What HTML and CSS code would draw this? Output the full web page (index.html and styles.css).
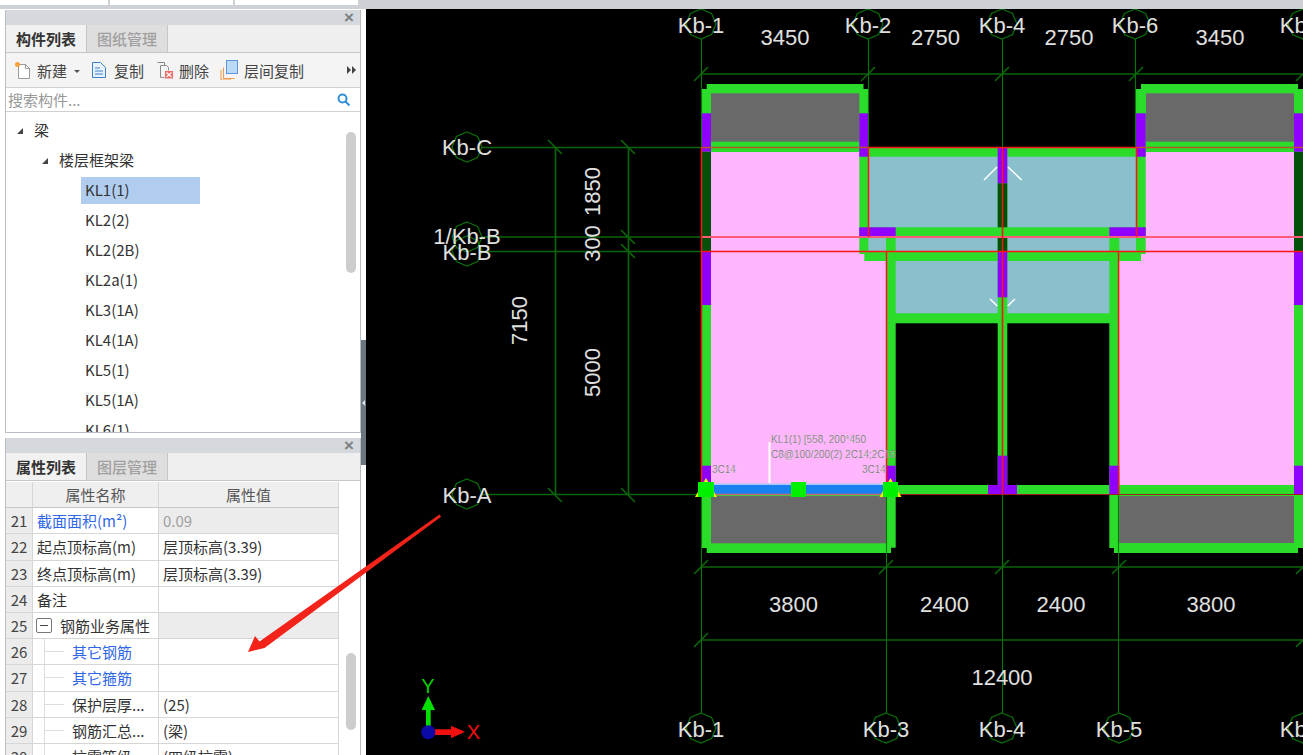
FILE: index.html
```html
<!DOCTYPE html>
<html lang="zh-CN">
<head>
<meta charset="UTF-8">
<meta name="viewport" content="width=device-width, initial-scale=1.0">
<title>构件列表</title>
<link rel="stylesheet" href="styles.css">
</head>
<body>

<div class="topbar">
    <div class="top-cell top-cell-a"></div>
    <div class="top-cell top-cell-b"></div>
    <div class="top-cell top-cell-c"></div>
</div>

<div class="main">
    <div class="sidebar">

        <!-- component list -->
        <section class="panel panel-list">
            <div class="panel-title"><span class="panel-close">&times;</span></div>
            <div class="tabs">
                <div class="tab active">构件列表</div>
                <div class="tab">图纸管理</div>
            </div>
            <div class="toolbar">
                <svg class="tool-icon icon-new" viewBox="0 0 18 18">
                    <path class="doc" d="M4.500 3.500h7l4 4v10h-11z"/>
                    <path class="doc-fold" d="M11.500 3.500v4h4"/>
                    <circle class="spark" cx="3.500" cy="3.500" r="2.500"/>
                </svg>
                <span class="tool-label">新建</span>
                <span class="caret"></span>
                <svg class="tool-icon icon-copy" viewBox="0 0 16 18">
                    <path class="doc-blue" d="M1.500 1.500h8l5 5v10h-13z"/>
                    <path class="doc-lines" d="M4 7h5M4 10h8M4 13h8"/>
                </svg>
                <span class="tool-label">复制</span>
                <svg class="tool-icon icon-del" viewBox="0 0 18 18">
                    <path class="doc-gray" d="M1.500 1.500h7v3"/>
                    <path class="doc-gray" d="M4.500 4.500h6l2 2v3M4.500 4.500v12h4"/>
                    <rect class="del-box" x="9" y="10" width="8" height="7.500"/>
                    <path class="del-x" d="M10.500 11.500l5 4.500M15.500 11.500l-5 4.500"/>
                </svg>
                <span class="tool-label">删除</span>
                <svg class="tool-icon icon-floor" viewBox="0 0 18 20">
                    <path class="floor-back" d="M3.500 7.500v11h11M1 10v10h10"/>
                    <rect class="floor-front" x="6.500" y="0.500" width="11" height="13"/>
                </svg>
                <span class="tool-label">层间复制</span>
                <span class="more">
                    <svg viewBox="0 0 9 8"><path d="M0 0l4 4-4 4zM5 0l4 4-4 4z"/></svg>
                </span>
            </div>
            <div class="search">
                <span class="search-hint">搜索构件...</span>
                <svg class="search-icon" viewBox="0 0 14 14">
                    <circle cx="5.500" cy="5.500" r="4"/>
                    <path d="M8.500 8.500l4 4"/>
                </svg>
            </div>
            <div class="tree">
                <div class="tree-row level-0"><span class="twist"></span>梁</div>
                <div class="tree-row level-1"><span class="twist"></span>楼层框架梁</div>
                <div class="tree-row level-2"><span class="leaf selected">KL1(1)</span></div>
                <div class="tree-row level-2"><span class="leaf">KL2(2)</span></div>
                <div class="tree-row level-2"><span class="leaf">KL2(2B)</span></div>
                <div class="tree-row level-2"><span class="leaf">KL2a(1)</span></div>
                <div class="tree-row level-2"><span class="leaf">KL3(1A)</span></div>
                <div class="tree-row level-2"><span class="leaf">KL4(1A)</span></div>
                <div class="tree-row level-2"><span class="leaf">KL5(1)</span></div>
                <div class="tree-row level-2"><span class="leaf">KL5(1A)</span></div>
                <div class="tree-row level-2"><span class="leaf">KL6(1)</span></div>
                <div class="scroll-thumb thumb-tree"></div>
            </div>
        </section>

        <!-- properties -->
        <section class="panel panel-props">
            <div class="panel-title"><span class="panel-close">&times;</span></div>
            <div class="tabs">
                <div class="tab active">属性列表</div>
                <div class="tab">图层管理</div>
            </div>
            <div class="props">
                <div class="props-grid">
                    <div class="cell head"></div>
                    <div class="cell head">属性名称</div>
                    <div class="cell head">属性值</div>

                    <div class="cell num">21</div>
                    <div class="cell name blue">截面面积(m²)</div>
                    <div class="cell value muted">0.09</div>

                    <div class="cell num">22</div>
                    <div class="cell name">起点顶标高(m)</div>
                    <div class="cell value">层顶标高(3.39)</div>

                    <div class="cell num">23</div>
                    <div class="cell name">终点顶标高(m)</div>
                    <div class="cell value">层顶标高(3.39)</div>

                    <div class="cell num">24</div>
                    <div class="cell name">备注</div>
                    <div class="cell value"></div>

                    <div class="cell num">25</div>
                    <div class="cell name group"><span class="minus"></span>钢筋业务属性</div>
                    <div class="cell value shaded"></div>

                    <div class="cell num">26</div>
                    <div class="cell name child blue">其它钢筋</div>
                    <div class="cell value"></div>

                    <div class="cell num">27</div>
                    <div class="cell name child blue">其它箍筋</div>
                    <div class="cell value"></div>

                    <div class="cell num">28</div>
                    <div class="cell name child">保护层厚...</div>
                    <div class="cell value">(25)</div>

                    <div class="cell num">29</div>
                    <div class="cell name child">钢筋汇总...</div>
                    <div class="cell value">(梁)</div>

                    <div class="cell num">30</div>
                    <div class="cell name child">抗震等级</div>
                    <div class="cell value">(四级抗震)</div>
                </div>
                <div class="scroll-thumb thumb-props"></div>
            </div>
        </section>
    </div>

    <div class="splitter"><span class="splitter-grip"></span></div>

    <!-- drawing, coordinates are page pixels -->
    <svg class="canvas" viewBox="366 9 937 746">
        <defs>
            <polygon id="bubble" class="bubble" points="0,-15 10.600,-10.600 15,0 10.600,10.600 0,15 -10.600,10.600 -15,0 -10.600,-10.600"/>
        </defs>

        <!-- slabs -->
        <g class="pink">
            <rect x="711" y="151" width="149" height="101"/>
            <rect x="711" y="251" width="176" height="235"/>
            <rect x="1145" y="151" width="150" height="101"/>
            <rect x="1118" y="251" width="177" height="235"/>
        </g>
        <g class="teal">
            <rect x="868" y="156" width="268" height="72"/>
            <rect x="868" y="236" width="268" height="16"/>
            <rect x="895" y="260" width="215" height="54"/>
        </g>

        <!-- green walls -->
        <g class="wall">
            <polygon points="701.700,89 706.700,89 706.700,84 863.500,84 863.500,89 868.300,89 868.300,152 701.700,152"/>
            <polygon points="1136,89 1141,89 1141,84 1298,84 1298,89 1303,89 1303,152 1136,152"/>
            <polygon points="701.700,494 895.700,494 895.700,547.700 891,547.700 891,553 706.700,553 706.700,548 701.700,548"/>
            <polygon points="1109.300,494 1303,494 1303,548 1298,548 1298,553 1114,553 1114,548 1109.300,548"/>
            <rect x="868" y="147.300" width="268" height="9.400"/>
            <rect x="859.300" y="151" width="9" height="103"/>
            <rect x="1136" y="151" width="9.700" height="103"/>
            <rect x="859.300" y="227.300" width="286.400" height="9.400"/>
            <rect x="864.300" y="251.700" width="276.700" height="9.300"/>
            <rect x="886" y="236" width="9.700" height="250"/>
            <rect x="1109.300" y="236" width="10" height="250"/>
            <rect x="886" y="313.300" width="233" height="10"/>
            <rect x="886" y="485" width="417" height="9.400"/>
            <rect x="997.700" y="147" width="9.600" height="340"/>
            <rect x="701.700" y="151" width="9.300" height="335"/>
            <rect x="1294" y="151" width="9" height="335"/>
        </g>
        <g class="gray">
            <rect x="711" y="93.300" width="148.300" height="48.400"/>
            <rect x="1146" y="93.300" width="148" height="48.400"/>
            <rect x="711" y="496" width="175.700" height="47.300"/>
            <rect x="1119.300" y="496" width="174.700" height="47"/>
        </g>

        <g class="dark-wall">
            <rect x="701.700" y="151.700" width="9.300" height="100"/>
            <rect x="1294" y="151.700" width="9" height="100"/>
            <rect x="997.700" y="183.300" width="9.600" height="44"/>
            <rect x="997.700" y="236.700" width="9.600" height="15"/>
        </g>
        <g class="column">
            <rect x="701.700" y="113.300" width="9.300" height="38.400"/>
            <rect x="859.300" y="113.300" width="9" height="43.400"/>
            <rect x="1136" y="113.300" width="9.700" height="43.400"/>
            <rect x="1294" y="113.300" width="9" height="38.400"/>
            <rect x="859.300" y="227.300" width="36.400" height="9.400"/>
            <rect x="1109.300" y="227.300" width="36.400" height="9.400"/>
            <rect x="997.700" y="147.300" width="9.600" height="36"/>
            <rect x="997.700" y="251.700" width="9.600" height="45.600"/>
            <rect x="701.700" y="251.700" width="9.300" height="53.300"/>
            <rect x="1294" y="251.700" width="9" height="53.300"/>
            <rect x="701.700" y="465.700" width="9.300" height="18"/>
            <rect x="886" y="465.700" width="9.700" height="20"/>
            <rect x="997.700" y="455.700" width="9.600" height="30"/>
            <rect x="988" y="485" width="29" height="9.400"/>
            <rect x="1109.300" y="465.700" width="10" height="28.700"/>
            <rect x="1294" y="465.700" width="9" height="28.700"/>
        </g>

        <!-- axis lines -->
        <g class="axis">
            <path d="M701.500 39V713M868.500 39V147M1002.500 39V485M1135.500 39V147"/>
            <path d="M886.500 494V713M1002.500 494V713M1118.500 494V713"/>
        </g>
        <g class="dim">
            <path d="M482 147.500H701M482 237H701M482 251.500H701M482 494.500H701"/>
            <path d="M701 74H1303M701 567H1303M701 640H1303M555.500 147V495M628.500 147V495"/>
            <path d="M694 81l14-14M861 81l14-14M995 81l14-14M1129 81l14-14M1296 81l14-14"/>
            <path d="M694 574l14-14M879 574l14-14M995 574l14-14M1112 574l14-14M1296 574l14-14M694 647l14-14M1296 647l14-14"/>
            <path d="M548 140l14 14M621 140l14 14M621 230l14 14M621 244l14 14M548 488l14 14M621 488l14 14"/>
        </g>

        <!-- beam axes -->
        <g class="beam-line">
            <path d="M701.500 147.500H868"/>
            <path d="M1136 147.500H1303"/>
        </g>
        <path class="red-pale" d="M701 237H1303"/>
        <path class="red-line" d="M868 147.500H1136.500M701 251.500H1303M701.500 147V486M868.500 147V237M886.500 251V495M1002.500 147V495M1136.500 147V237M1118.500 251V495"/>
        <path class="red-dark" d="M895 494.500H1303"/>

        <!-- selected beam -->
        <rect class="beam-glow" x="711" y="483.500" width="176" height="2"/>
        <rect class="beam" x="711" y="485" width="176" height="9"/>
        <path class="beam-edge" d="M711 494.500H887"/>
        <path class="leader" d="M769.500 442V483"/>
        <polygon class="grip-tri" points="706,478 717,497 695,497"/>
        <polygon class="grip-tri" points="890.500,478 901.500,497 879.500,497"/>
        <rect class="grip" x="698" y="482" width="16" height="15"/>
        <rect class="grip" x="791" y="482" width="15" height="15"/>
        <rect class="grip" x="883" y="482" width="15" height="15"/>
        <text class="note" x="771" y="443">KL1(1) [558, 200*450</text>
        <text class="note" x="771" y="458">C8@100/200(2) 2C14;2C16</text>
        <text class="note" x="712" y="473">3C14</text>
        <text class="note" x="862" y="473">3C14</text>

        <!-- slab marks -->
        <path class="mark" d="M984 180l13-13M1021.700 180l-13.700-13M990 299l7.300 7M1015 299l-7.300 7"/>

        <!-- axis bubbles and labels -->
        <use href="#bubble" x="701" y="24"/>
        <use href="#bubble" x="868" y="24"/>
        <use href="#bubble" x="1002" y="24"/>
        <use href="#bubble" x="1135" y="24"/>
        <use href="#bubble" x="1303" y="24"/>
        <use href="#bubble" x="701" y="728"/>
        <use href="#bubble" x="886" y="728"/>
        <use href="#bubble" x="1002" y="728"/>
        <use href="#bubble" x="1119" y="728"/>
        <use href="#bubble" x="1303" y="728"/>
        <use href="#bubble" x="467" y="147"/>
        <use href="#bubble" x="467" y="237"/>
        <use href="#bubble" x="467" y="251"/>
        <use href="#bubble" x="467" y="494"/>

        <g class="label">
            <text x="701" y="33">Kb-1</text>
            <text x="868" y="33">Kb-2</text>
            <text x="1002" y="33">Kb-4</text>
            <text x="1135" y="33">Kb-6</text>
            <text x="1303" y="33">Kb-7</text>
            <text x="785" y="45">3450</text>
            <text x="935.500" y="45">2750</text>
            <text x="1069" y="45">2750</text>
            <text x="1220" y="45">3450</text>
            <text x="793.500" y="612">3800</text>
            <text x="944.500" y="612">2400</text>
            <text x="1061" y="612">2400</text>
            <text x="1211" y="612">3800</text>
            <text x="1002" y="685">12400</text>
            <text x="701" y="737">Kb-1</text>
            <text x="886" y="737">Kb-3</text>
            <text x="1002" y="737">Kb-4</text>
            <text x="1119" y="737">Kb-5</text>
            <text x="1303" y="737">Kb-7</text>
            <text x="467" y="155">Kb-C</text>
            <text x="467" y="244">1/Kb-B</text>
            <text x="467" y="260">Kb-B</text>
            <text x="467" y="503">Kb-A</text>
            <text transform="translate(600 191.500) rotate(-90)">1850</text>
            <text transform="translate(600 243.500) rotate(-90)">300</text>
            <text transform="translate(527 320.500) rotate(-90)">7150</text>
            <text transform="translate(600 372.500) rotate(-90)">5000</text>
        </g>

        <!-- ucs icon -->
        <path class="ucs-y" d="M426 710h4.700v22h-4.700zM428.300 696l6.700 14h-13.400z"/>
        <path class="ucs-x" d="M430 729.300h21v-3.600l14 6-14 6.600v-3.300h-21z"/>
        <circle class="ucs-o" cx="428.300" cy="732.300" r="7"/>
        <text class="ucs-label-y" x="428" y="693">Y</text>
        <text class="ucs-label-x" x="473.500" y="738.500">X</text>
    </svg>
</div>

<!-- red arrow drawn over the screenshot -->
<svg class="callout" viewBox="0 0 1303 755">
    <polygon points="439.500,514.500 441,516.800 264.500,648 248,652 255,636 259.500,641.500"/>
</svg>

</body>
</html>
```

FILE: styles.css
```css
* {
    box-sizing: border-box;
}
html, body {
    height: 100%;
}
body {
    margin: 0;
    overflow: hidden;
    background-color: #fff;
    font-family: "Noto Sans CJK SC", "Noto Sans", sans-serif;
    font-size: 15px;
    color: #333;
}

.topbar {
    display: flex;
    height: 9px;
    background-color: #cdd0d5;
}
.top-cell {
    height: 5px;
    background-color: #fff;
    margin-right: 2px;
}
.top-cell-a {
    width: 108px;
}
.top-cell-b {
    width: 123px;
}
.top-cell-c {
    width: 123px;
}

.main {
    display: flex;
    height: 746px;
}
.sidebar {
    width: 361px;
    padding: 1px 0 0 5px;
    background-color: #fff;
}
.panel {
    width: 356px;
    border: 1px solid #b9bcc0;
    border-top: none;
    border-bottom: none;
    overflow: hidden;
}
.panel-list {
    height: 423px;
    border-bottom: 1px solid #b9bcc0;
    margin-bottom: 5px;
}
.panel-props {
    height: 317px;
}
.panel-title {
    display: flex;
    justify-content: flex-end;
    align-items: center;
    height: 15px;
    padding-right: 6px;
    background-color: #d5d8dc;
}
.panel-close {
    font-family: "Liberation Sans", sans-serif;
    font-size: 17px;
    font-weight: bold;
    line-height: 15px;
    color: #7c7f83;
}
.tabs {
    display: flex;
    height: 28px;
    background-color: #efefef;
    border-bottom: 1px solid #c6c6c6;
}
.tab {
    width: 81px;
    text-align: center;
    line-height: 27px;
    font-size: 15px;
    color: #a0a0a0;
    background-color: #dedede;
    font-weight: 500;
}
.tab.active {
    color: #333;
    background-color: #f1f1f1;
    border-right: 1px solid #c6c6c6;
    font-weight: 700;
}
.tab:nth-child(2) {
    border-right: 1px solid #c6c6c6;
}

.toolbar {
    display: flex;
    align-items: center;
    height: 35px;
    padding-left: 8px;
    background-color: #f4f4f4;
    border-bottom: 1px solid #d0d0d0;
    position: relative;
}
.tool-icon {
    flex: none;
    width: 18px;
    height: 18px;
}
.tool-label {
    flex: none;
    font-size: 15px;
    color: #444;
    margin-left: 5px;
}
.caret {
    width: 0;
    height: 0;
    margin: 2px 0 0 7px;
    border-left: 3px solid transparent;
    border-right: 3px solid transparent;
    border-top: 3px solid #555;
}
.icon-copy {
    margin-left: 11px;
    width: 16px;
}
.icon-copy + .tool-label {
    margin-left: 7px;
}
.icon-del {
    margin-left: 12px;
}
.icon-floor {
    margin-left: 11px;
    height: 20px;
}
.icon-floor + .tool-label {
    margin-left: 6px;
}
.more {
    margin-left: auto;
    margin-right: 4px;
    width: 9px;
    display: flex;
}
.more svg {
    width: 9px;
    height: 8px;
    fill: #444;
}
.doc {
    fill: #fff;
    stroke: #999;
}
.doc-fold {
    fill: none;
    stroke: #999;
}
.spark {
    fill: #f5a33b;
}
.doc-blue {
    fill: #e8f2fc;
    stroke: #3d80c8;
}
.doc-lines {
    fill: none;
    stroke: #3d80c8;
}
.doc-gray {
    fill: none;
    stroke: #8a8a8a;
}
.del-box {
    fill: #ee6a6a;
}
.del-x {
    fill: none;
    stroke: #fff;
    stroke-width: 1.2;
}
.floor-back {
    fill: none;
    stroke: #ee9a4a;
}
.floor-front {
    fill: #bcd9f7;
    stroke: #5b97dc;
}

.search {
    display: flex;
    align-items: center;
    justify-content: space-between;
    height: 24px;
    padding: 0 4px 0 2px;
    background-color: #fff;
    border-bottom: 1px solid #d0d0d0;
}
.search-hint {
    font-size: 15px;
    color: #999;
}
.search-icon {
    width: 14px;
    height: 14px;
    margin-right: 5px;
    fill: none;
    stroke: #2f8fd6;
    stroke-width: 2;
}

.tree {
    position: relative;
    height: 320px;
    padding-top: 3px;
    overflow: hidden;
    background-color: #fff;
}
.tree-row {
    display: flex;
    align-items: center;
    height: 30px;
    font-size: 15px;
    color: #333;
}
.level-0 {
    padding: 0 0 2px 11px;
}
.level-1 {
    padding: 0 0 2px 36px;
}
.level-2 {
    padding-left: 75px;
}
.twist {
    width: 0;
    height: 0;
    margin: 3px 11px 0 0;
    border-bottom: 6px solid #444;
    border-left: 6px solid transparent;
}
.leaf {
    display: block;
    width: 119px;
    height: 27px;
    padding-left: 4px;
    line-height: 26px;
}
.leaf.selected {
    background-color: #b0cdef;
}
.scroll-thumb {
    position: absolute;
    right: 4px;
    width: 10px;
    border-radius: 5px;
    background-color: #cdcdcd;
}
.thumb-tree {
    top: 20px;
    height: 141px;
}

.props {
    position: relative;
    height: 274px;
    padding-top: 1px;
    overflow: hidden;
    background-color: #fff;
}
.props-grid {
    display: grid;
    grid-template-columns: 27px 126px 180px;
    grid-auto-rows: 26.2px;
    width: 333px;
}
.cell {
    display: flex;
    align-items: center;
    position: relative;
    padding-left: 4px;
    font-size: 15px;
    color: #333;
    white-space: nowrap;
    background-color: #fff;
    border-right: 1px solid #d6d6d6;
    border-bottom: 1px solid #d6d6d6;
}
.cell.head {
    justify-content: center;
    padding-left: 0;
    color: #555;
    background-color: #efefef;
    border-bottom: 1px solid #c8c8c8;
}
.cell.num {
    justify-content: center;
    padding-left: 0;
    color: #444;
    background-color: #ececec;
}
.cell.blue {
    color: #2f66e8;
}
.cell.muted {
    color: #a0a0a0;
    background-color: #ececec;
}
.cell.shaded {
    background-color: #ececec;
}
.cell.group {
    padding-left: 3px;
}
.minus {
    position: relative;
    flex: none;
    width: 16px;
    height: 15px;
    margin-right: 8px;
    border: 1px solid #777;
    border-radius: 2px;
    background-color: #fff;
}
.minus::after {
    content: '';
    position: absolute;
    left: 3px;
    right: 3px;
    top: 6px;
    height: 1px;
    background-color: #444;
}
.cell.child {
    padding-left: 39px;
}
.cell.child::before {
    content: '';
    position: absolute;
    left: 11px;
    top: 0;
    bottom: 0;
    width: 1px;
    background-color: #ddd;
}
.cell.child::after {
    content: '';
    position: absolute;
    left: 11px;
    top: 12px;
    width: 20px;
    height: 1px;
    background-color: #ddd;
}
.thumb-props {
    top: 172px;
    height: 77px;
}

.splitter {
    position: relative;
    width: 5px;
    background-color: #fff;
}
.splitter::before {
    content: '';
    position: absolute;
    left: 0;
    right: 0;
    top: 331px;
    height: 125px;
    background-color: #6b7580;
}
.splitter-grip {
    position: absolute;
    left: 1px;
    top: 391px;
    width: 0;
    height: 0;
    border-top: 3px solid transparent;
    border-bottom: 3px solid transparent;
    border-right: 3px solid #dfe3e6;
}

.canvas {
    flex: 1;
    display: block;
    height: 746px;
    background-color: #000;
}
.pink {
    fill: #ffb6fc;
}
.teal {
    fill: #8ac0cb;
}
.gray {
    fill: #696969;
}
.wall {
    fill: #2bdc2b;
}
.dark-wall {
    fill: #03500a;
}
.column {
    fill: #8f00ff;
}
.axis {
    fill: none;
    stroke: #007a00;
    stroke-width: 1.1;
}
.dim {
    fill: none;
    stroke: #0a640a;
    stroke-width: 1.7;
}
.beam-line {
    fill: none;
    stroke: #b5552a;
    stroke-width: 1.6;
}
.red-pale {
    fill: none;
    stroke: #ff5a78;
    stroke-width: 2;
}
.red-line {
    fill: none;
    stroke: #ff1414;
    stroke-width: 1.5;
}
.red-dark {
    fill: none;
    stroke: #a81818;
    stroke-width: 1.2;
}
.beam {
    fill: #1a80f0;
}
.beam-glow {
    fill: #a8c8ff;
}
.beam-edge {
    fill: none;
    stroke: #c06a78;
    stroke-width: 1.5;
}
.leader {
    fill: none;
    stroke: #fff;
    stroke-width: 2;
}
.grip {
    fill: #00f000;
}
.grip-tri {
    fill: #f0f000;
}
.note {
    font-family: "Liberation Sans", sans-serif;
    font-size: 10px;
    fill: #666;
    stroke: #eee;
    stroke-width: 0.2;
}
.mark {
    fill: none;
    stroke: #fff;
    stroke-width: 1.5;
}
.bubble {
    fill: none;
    stroke: #0a700a;
    stroke-width: 1.2;
}
.label {
    font-family: "Liberation Sans", sans-serif;
    font-size: 22px;
    text-anchor: middle;
    fill: #e0e0e0;
}
.ucs-y {
    fill: #00e000;
}
.ucs-x {
    fill: #f01010;
}
.ucs-o {
    fill: #0a0aa8;
}
.ucs-label-y,
.ucs-label-x {
    font-family: "Liberation Sans", sans-serif;
    font-size: 20px;
    text-anchor: middle;
}
.ucs-label-y {
    fill: #00d000;
}
.ucs-label-x {
    fill: #f01010;
}

.callout {
    position: absolute;
    left: 0;
    top: 0;
    width: 1303px;
    height: 755px;
    pointer-events: none;
    fill: #f4231a;
}
```
